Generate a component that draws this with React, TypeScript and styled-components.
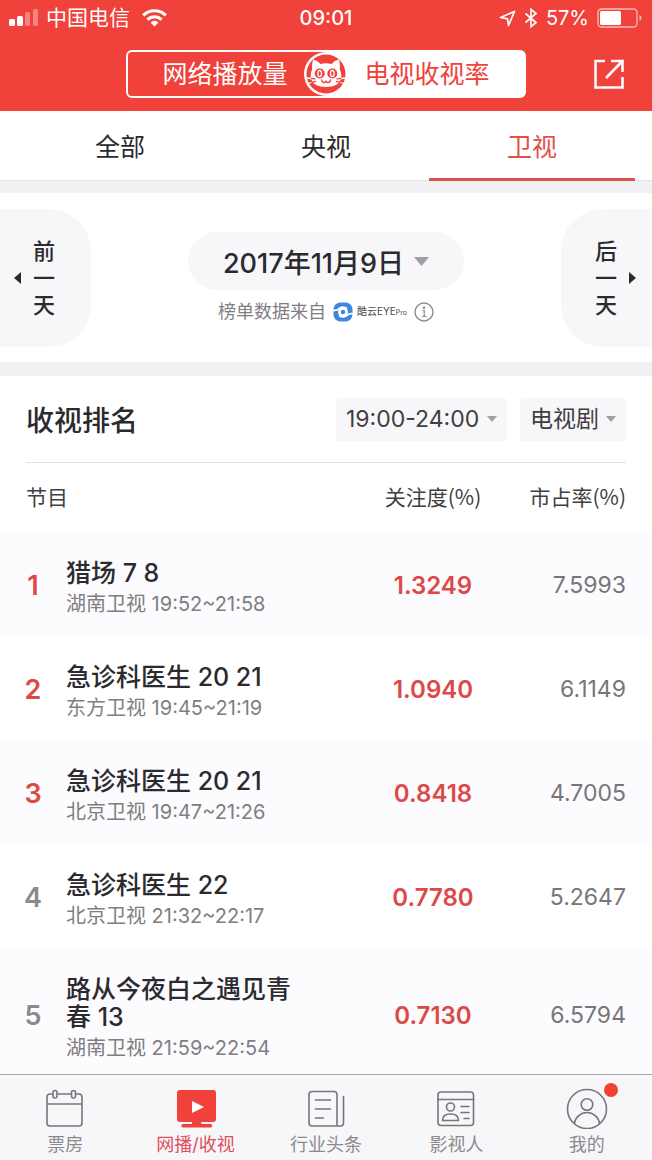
import React, { useState } from "react";
import styled, { createGlobalStyle } from "styled-components";

const c = {
  red: "#f0413a",
  ink: "#2b2a2e",
  body: "#3f3e42",
  grey: "#7f7e82",
  pale: "#f7f6f9",
  stripe: "#fcfbfe",
  band: "#f1f0f3",
  line: "#e3e2e5",
};

const GlobalStyle = createGlobalStyle`
  *, *::before, *::after { box-sizing: border-box; }
  body { margin: 0; background: #fff; }
  body, button, select {
    font-family: Inter, "Noto Sans CJK SC", "Liberation Sans", sans-serif;
    color: ${c.ink};
  }
  button { margin: 0; padding: 0; border: 0; background: none; cursor: pointer; }
  svg { display: block; flex: none; }
`;

const Screen = styled.div`
  display: flex;
  flex-direction: column;
  height: 100vh;
  background: #fff;
`;

const Header = styled.header`
  flex: none;
  background: ${c.red};
  color: #fff;
  padding-bottom: 13px;
`;

const StatusBar = styled.div`
  display: grid;
  grid-template-columns: 1fr auto 1fr;
  align-items: center;
  height: 36px;
  padding: 0 9px;
  font-size: 20px;
  line-height: 36px;
`;

const StatusGroup = styled.div<{ $end?: boolean }>`
  display: flex;
  align-items: center;
  justify-content: ${(p) => (p.$end ? "flex-end" : "flex-start")};
  gap: 8px;
`;

const Carrier = styled.span`
  font-size: 21px;
  margin-right: 4px;
`;

const Clock = styled.time`
  font-weight: 500;
`;

const NavBar = styled.div`
  display: grid;
  grid-template-columns: 1fr 400px 1fr;
  align-items: center;
  margin-top: 14px;
`;

const Segments = styled.div`
  position: relative;
  grid-column: 2;
  display: flex;
  height: 48px;
  border: 2px solid #fff;
  border-radius: 6px;
`;

const Segment = styled.button<{ $active?: boolean }>`
  flex: 1;
  font-size: 25px;
  line-height: 44px;
  padding: ${(p) => (p.$active ? "0 0 0 4px" : "0 4px 0 0")};
  background: ${(p) => (p.$active ? "#fff" : "transparent")};
  color: ${(p) => (p.$active ? c.red : "#fff")};
`;

const Badge = styled.div`
  position: absolute;
  left: 50%;
  top: 50%;
  transform: translate(-50%, -50%);
  pointer-events: none;
`;

const ShareButton = styled.button`
  justify-self: end;
  margin-right: 27px;
`;

const Tabs = styled.nav`
  flex: none;
  display: flex;
  height: 70px;
  padding: 0 17px;
  border-bottom: 1px solid ${c.line};
`;

const Tab = styled.button<{ $active?: boolean }>`
  flex: 1;
  margin-bottom: -1px;
  border-bottom: 3px solid ${(p) => (p.$active ? "#e2504c" : "transparent")};
  color: ${(p) => (p.$active ? "#e2504c" : c.ink)};
  font-size: 25px;
`;

const Main = styled.main`
  flex: 1;
  min-height: 0;
  overflow-y: auto;
  scrollbar-width: none;
  background: ${c.band};
`;

const DatePanel = styled.section`
  display: flex;
  justify-content: space-between;
  align-items: flex-start;
  margin: 12px 0 14px;
  padding: 16px 0 15px;
  background: #fff;
`;

const DayButton = styled.button<{ $next?: boolean }>`
  display: flex;
  align-items: center;
  flex-direction: ${(p) => (p.$next ? "row-reverse" : "row")};
  gap: 12px;
  width: 91px;
  height: 138px;
  padding: 0 16px 0 14px;
  background: ${c.pale};
  border-radius: ${(p) => (p.$next ? "42px 0 0 42px" : "0 42px 42px 0")};
  font-size: 22px;
  font-weight: 500;
  line-height: 27px;
`;

const DayLabel = styled.span`
  width: 22px;
`;

const DateColumn = styled.div`
  display: flex;
  flex-direction: column;
  align-items: center;
  padding-top: 23px;
`;

const DateButton = styled.button`
  display: flex;
  align-items: center;
  justify-content: center;
  gap: 10px;
  width: 276px;
  height: 58px;
  border-radius: 29px;
  background: ${c.pale};
  font-size: 27px;
  font-weight: 500;
`;

const Source = styled.p`
  display: flex;
  align-items: center;
  margin: 8px 0 0;
  color: ${c.grey};
  font-size: 18px;
  line-height: 26px;
  gap: 7px;
`;

const Brand = styled.span`
  display: flex;
  align-items: center;
  gap: 4px;
  color: #4c4b50;
  font-size: 10px;
`;

const BrandSmall = styled.span`
  font-size: 7px;
`;

const Ranking = styled.section`
  background: #fff;
`;

const RankingHead = styled.div`
  display: flex;
  align-items: center;
  gap: 13px;
  height: 87px;
  margin: 0 26px;
  border-bottom: 1px solid ${c.line};
`;

const Heading = styled.h1`
  flex: 1;
  margin: 0;
  font-size: 28px;
  font-weight: 500;
`;

const Picker = styled.label<{ $width: number }>`
  position: relative;
  display: block;
  width: ${(p) => p.$width}px;
  height: 43px;

  svg {
    position: absolute;
    right: 10px;
    top: 18px;
    pointer-events: none;
  }
`;

const Select = styled.select`
  appearance: none;
  width: 100%;
  height: 100%;
  padding: 0 0 0 10px;
  border: 0;
  border-radius: 3px;
  background: ${c.pale};
  font-size: 23px;
  color: ${c.body};
`;

const Table = styled.table`
  width: 100%;
  table-layout: fixed;
  border-collapse: collapse;
`;

const RankCol = styled.col`
  width: 66px;
`;

const ValueCol = styled.col`
  width: 146px;
`;

const headPadding = {
  left: "0 0 4px 26px",
  center: "0 0 4px",
  right: "0 26px 4px 0",
};

const HeadCell = styled.th<{ $align: "left" | "center" | "right" }>`
  height: 70px;
  padding: ${(p) => headPadding[p.$align]};
  text-align: ${(p) => p.$align};
  font-family: "Noto Sans CJK SC", sans-serif;
  font-size: 21px;
  font-weight: 400;
  color: ${c.body};
  white-space: nowrap;
`;

const Row = styled.tr`
  &:nth-child(odd) {
    background: ${c.stripe};
  }
`;

const RankCell = styled.td<{ $top: boolean }>`
  padding: 0;
  text-align: center;
  font-size: 27px;
  font-weight: 600;
  color: ${(p) => (p.$top ? "#dc4a48" : "#8b8a8e")};
`;

const ShowCell = styled.td`
  padding: 26px 50px 19px 0;
`;

const Title = styled.div`
  font-size: 25px;
  font-weight: 500;
  line-height: 28px;
`;

const Airing = styled.div`
  padding-top: 3px;
  font-size: 20px;
  line-height: 28px;
  color: ${c.grey};
`;

const AttentionCell = styled.td`
  padding: 0;
  text-align: center;
  font-size: 24px;
  font-weight: 600;
  color: #dc4a48;
`;

const ShareCell = styled.td`
  padding: 0 26px 0 0;
  text-align: right;
  font-size: 23px;
  color: #77767a;
`;

const BottomBar = styled.nav`
  flex: none;
  display: flex;
  height: 86px;
  border-top: 1px solid #aaa8ad;
  background: ${c.pale};
`;

const BottomLink = styled.a<{ $active?: boolean }>`
  flex: 1;
  display: flex;
  flex-direction: column;
  align-items: center;
  padding-top: 12px;
  gap: 2px;
  text-decoration: none;
  font-size: 18px;
  line-height: 28px;
  color: ${(p) => (p.$active ? "#dd505a" : "#8b8a8e")};
`;

const IconBox = styled.span`
  position: relative;
`;

const Dot = styled.span`
  position: absolute;
  top: -4px;
  right: -10px;
  width: 14px;
  height: 14px;
  border-radius: 50%;
  background: #f0432f;
`;

const Signal = () => (
  <svg width="29" height="18" viewBox="0 0 29 18" fill="#fff">
    <rect x="0" y="10" width="6" height="7" rx="1.5" />
    <rect x="8" y="7" width="6" height="10" rx="1.5" />
    <rect x="16" y="3" width="5" height="14" rx="1.5" opacity=".35" />
    <rect x="24" y="0" width="5" height="17" rx="1.5" opacity=".35" />
  </svg>
);

const Wifi = () => (
  <svg width="25" height="18" viewBox="0 0 25 18" fill="none" stroke="#fff" strokeWidth="3">
    <path d="M1.2 6.4a16 16 0 0 1 22.600 0" />
    <path d="M5.400 10.600a10 10 0 0 1 14.200 0" />
    <path d="M12.500 17.500l-4-4a5.700 5.700 0 0 1 8 0z" fill="#fff" stroke="none" />
  </svg>
);

const LocationArrow = () => (
  <svg width="17" height="17" viewBox="0 0 17 17" fill="none" stroke="#fff" strokeWidth="1.700" strokeLinejoin="round">
    <path d="M1.500 7.500L15.500 1.500L9.500 15.500L8.500 8.800z" />
  </svg>
);

const Bluetooth = () => (
  <svg width="14" height="20" viewBox="0 0 14 20" fill="none" stroke="#fff" strokeWidth="1.700">
    <path d="M1.500 5.500l10.500 9L7 18.700V1.300l5 4.200-10.500 9" />
  </svg>
);

const Battery = () => (
  <svg width="46" height="20" viewBox="0 0 46 20">
    <rect x="1" y="1" width="39" height="18" rx="3.500" fill="none" stroke="#fff" strokeWidth="1.300" opacity=".65" />
    <rect x="3" y="3" width="21" height="14" rx="1.500" fill="#fff" />
    <path d="M42.500 7v6q2-1 2-3t-2-3z" fill="#fff" opacity=".65" />
  </svg>
);

const Cat = () => (
  <svg width="44" height="44" viewBox="0 0 44 44">
    <circle cx="22" cy="22" r="22" fill="#fff" />
    <circle cx="22" cy="22" r="19.500" fill={c.red} />
    <path
      d="M9 7.500q4.500.8 7.500 4.500q5.500-1.300 11 0q3-3.700 7.500-4.500q1.500 5.500.8 10q2.200 4 1.200 9.500q-2.500 8-15 8t-15-8q-1-5.500 1.200-9.500q-.7-4.500.8-10z"
      fill="#fff"
    />
    <g fill={c.red}>
      <circle cx="15.700" cy="21.500" r="5" />
      <circle cx="28.300" cy="21.500" r="5" />
    </g>
    <g fill="none" stroke="#fff" strokeWidth="1.300">
      <ellipse cx="15.700" cy="21.500" rx="1.800" ry="3.200" />
      <ellipse cx="28.300" cy="21.500" rx="1.800" ry="3.200" />
    </g>
    <g fill="none" stroke={c.red} strokeWidth="1.300" strokeLinecap="round">
      <path d="M17.500 28q.5 2.500 2.500 2.500t2-2q0 2 2 2t2.500-2.500" />
      <path d="M6 26.300l5 .6M7 30.500l4.500-1.200M38 26.300l-5 .6M37 30.500l-4.500-1.200" />
    </g>
    <path d="M2.500 26l4.500.5M4 31.500l3.500-1M41.500 26l-4.500.5M40 31.500l-3.500-1" stroke="#fff" strokeWidth="1.300" />
  </svg>
);

const ShareIcon = () => (
  <svg width="32" height="32" viewBox="0 0 32 32" fill="none" stroke="#fff" strokeWidth="2.600">
    <path d="M12 3H2.500V29.500H29.500V19" />
    <path d="M18 3H29.500V14M29 3.500L13 20" />
  </svg>
);

const Caret = ({ w, h }: { w: number; h: number }) => (
  <svg width={w} height={h} viewBox="0 0 10 6" preserveAspectRatio="none" fill="#a09fa3">
    <path d="M0 0h10L5 6z" />
  </svg>
);

const SideCaret = ({ next }: { next?: boolean }) => (
  <svg width="7" height="12" viewBox="0 0 7 12" fill={c.ink}>
    <path d={next ? "M0 0v12l7-6z" : "M7 0v12L0 6z"} />
  </svg>
);

const BrandMark = () => (
  <svg width="20" height="20" viewBox="0 0 20 20">
    <rect x=".5" y=".5" width="19" height="19" rx="7" fill="#3f86e2" />
    <circle cx="10" cy="10" r="5" fill="#fff" />
    <circle cx="10" cy="10" r="2.200" fill="#3f86e2" />
    <g fill="none" stroke="#fff" strokeWidth="1.700">
      <path d="M0 8q3.500 1 5.500-1q4-3.500 8.500-.5M20 12q-3.500-1-5.500 1q-4 3.500-8.500.5" />
    </g>
  </svg>
);

const InfoIcon = () => (
  <svg width="20" height="20" viewBox="0 0 20 20" fill="none" stroke="#8b8a8e" strokeWidth="1.400">
    <circle cx="10" cy="10" r="9" />
    <path d="M8.300 8.500H10.200V14.500M8 14.500h4.400" strokeWidth="1.200" />
    <circle cx="10" cy="5.700" r=".6" fill="#8b8a8e" />
  </svg>
);

const lineIcon = {
  width: 42,
  height: 42,
  viewBox: "0 0 42 42",
  fill: "none",
  stroke: "#77767a",
  strokeWidth: 1.6,
  strokeLinecap: "round" as const,
};

const CalendarIcon = () => (
  <svg {...lineIcon}>
    <path d="M8 7H6a3 3 0 0 0-3 3V36a3 3 0 0 0 3 3H35a3 3 0 0 0 3-3V10a3 3 0 0 0-3-3H32.500M14 7H26.500M3 17H38" />
    <rect x="9" y="3.500" width="4" height="7.500" rx="2" />
    <rect x="27.500" y="3.500" width="4" height="7.500" rx="2" />
  </svg>
);

const ScreenIcon = () => (
  <svg width="42" height="42" viewBox="0 0 42 42" fill={c.red}>
    <rect x="2" y="3" width="39" height="32" rx="3" />
    <path d="M17 34H26.500V37H35.500a1.500 1.500 0 0 1 0 3.500H8a1.500 1.500 0 0 1 0-3.500H17z" />
    <path d="M17 14V26L29 20z" fill="#fff" />
    <path d="M2 35.700H17M26.500 35.700H41" stroke={c.pale} strokeWidth="1.400" />
  </svg>
);

const NewsIcon = () => (
  <svg {...lineIcon}>
    <path d="M7 4.500H29a3 3 0 0 1 3 3V39H7a3 3 0 0 1-3-3V7.500a3 3 0 0 1 3-3zM32 39H35.500a3 3 0 0 0 3-3V9.500" />
    <path d="M10.500 13H25.500M10.500 22H25.500M10.500 31H18.500" />
  </svg>
);

const PeopleIcon = () => (
  <svg {...lineIcon}>
    <rect x="3" y="5" width="35.500" height="33.500" rx="3" />
    <path d="M3 12.500H38.500M26 19.500H34M26 25.500H34M29 31.500H34" />
    <circle cx="15.500" cy="20" r="4" />
    <path d="M7.500 33.500q0-6.500 8-6.500t8 6.500z" />
  </svg>
);

const MeIcon = () => (
  <svg {...lineIcon}>
    <circle cx="21" cy="22" r="19.500" />
    <circle cx="21" cy="17.500" r="5.800" />
    <path d="M8.500 36.500a12.600 12.600 0 0 1 25 0" />
  </svg>
);

const shows = [
  { title: "猎场 7 8", airing: "湖南卫视 19:52~21:58", attention: "1.3249", share: "7.5993" },
  { title: "急诊科医生 20 21", airing: "东方卫视 19:45~21:19", attention: "1.0940", share: "6.1149" },
  { title: "急诊科医生 20 21", airing: "北京卫视 19:47~21:26", attention: "0.8418", share: "4.7005" },
  { title: "急诊科医生 22", airing: "北京卫视 21:32~22:17", attention: "0.7780", share: "5.2647" },
  { title: "路从今夜白之遇见青春 13", airing: "湖南卫视 21:59~22:54", attention: "0.7130", share: "6.5794" },
];

const sections = [
  { label: "票房", icon: <CalendarIcon /> },
  { label: "网播/收视", icon: <ScreenIcon />, active: true },
  { label: "行业头条", icon: <NewsIcon /> },
  { label: "影视人", icon: <PeopleIcon /> },
  { label: "我的", icon: <MeIcon />, unread: true },
];

export default function App() {
  const [tab, setTab] = useState("卫视");

  return (
    <Screen>
      <GlobalStyle />
      <Header>
        <StatusBar>
          <StatusGroup>
            <Signal />
            <Carrier>中国电信</Carrier>
            <Wifi />
          </StatusGroup>
          <Clock>09:01</Clock>
          <StatusGroup $end>
            <LocationArrow />
            <Bluetooth />
            <span>57%</span>
            <Battery />
          </StatusGroup>
        </StatusBar>
        <NavBar>
          <Segments>
            <Segment>网络播放量</Segment>
            <Segment $active>电视收视率</Segment>
            <Badge>
              <Cat />
            </Badge>
          </Segments>
          <ShareButton aria-label="分享">
            <ShareIcon />
          </ShareButton>
        </NavBar>
      </Header>

      <Tabs>
        {["全部", "央视", "卫视"].map((name) => (
          <Tab key={name} $active={name === tab} onClick={() => setTab(name)}>
            {name}
          </Tab>
        ))}
      </Tabs>

      <Main>
        <DatePanel>
          <DayButton>
            <SideCaret />
            <DayLabel>前一天</DayLabel>
          </DayButton>
          <DateColumn>
            <DateButton>
              2017年11月9日
              <Caret w={15} h={9} />
            </DateButton>
            <Source>
              榜单数据来自
              <Brand>
                <BrandMark />
                <span>
                  酷云EYE<BrandSmall>Pro</BrandSmall>
                </span>
              </Brand>
              <InfoIcon />
            </Source>
          </DateColumn>
          <DayButton $next>
            <SideCaret next />
            <DayLabel>后一天</DayLabel>
          </DayButton>
        </DatePanel>

        <Ranking>
          <RankingHead>
            <Heading>收视排名</Heading>
            <Picker $width={171}>
              <Select aria-label="时段">
                <option>19:00-24:00</option>
              </Select>
              <Caret w={10} h={6} />
            </Picker>
            <Picker $width={106}>
              <Select aria-label="类型">
                <option>电视剧</option>
              </Select>
              <Caret w={10} h={6} />
            </Picker>
          </RankingHead>
          <Table>
            <colgroup>
              <RankCol />
              <col />
              <ValueCol />
              <ValueCol />
            </colgroup>
            <thead>
              <tr>
                <HeadCell $align="left" colSpan={2}>
                  节目
                </HeadCell>
                <HeadCell $align="center">关注度(%)</HeadCell>
                <HeadCell $align="right">市占率(%)</HeadCell>
              </tr>
            </thead>
            <tbody>
              {shows.map((show, i) => (
                <Row key={show.airing}>
                  <RankCell $top={i < 3}>{i + 1}</RankCell>
                  <ShowCell>
                    <Title>{show.title}</Title>
                    <Airing>{show.airing}</Airing>
                  </ShowCell>
                  <AttentionCell>{show.attention}</AttentionCell>
                  <ShareCell>{show.share}</ShareCell>
                </Row>
              ))}
            </tbody>
          </Table>
        </Ranking>
      </Main>

      <BottomBar>
        {sections.map((s) => (
          <BottomLink key={s.label} href="#" $active={s.active}>
            <IconBox>
              {s.icon}
              {s.unread && <Dot />}
            </IconBox>
            {s.label}
          </BottomLink>
        ))}
      </BottomBar>
    </Screen>
  );
}
